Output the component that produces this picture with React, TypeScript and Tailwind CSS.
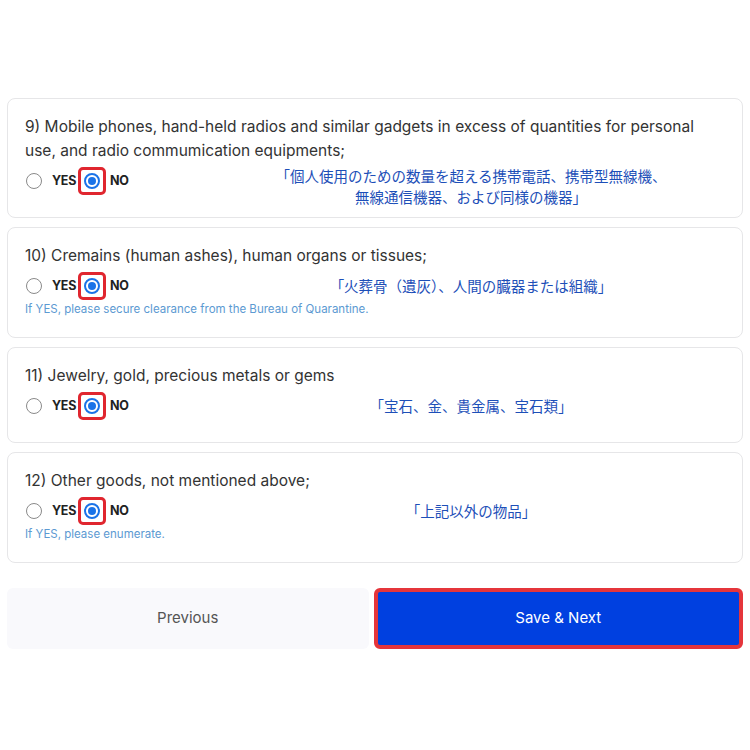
import React from "react";

type Item = {
  no: number;
  text: string;
  jp: string[];
  hint?: string;
};

const ITEMS: Item[] = [
  {
    no: 9,
    text: "Mobile phones, hand-held radios and similar gadgets in excess of quantities for personal use, and radio commumication equipments;",
    jp: ["「個人使用のための数量を超える携帯電話、携帯型無線機、", "無線通信機器、および同様の機器」"],
  },
  {
    no: 10,
    text: "Cremains (human ashes), human organs or tissues;",
    jp: ["「火葬骨（遺灰）、人間の臓器または組織」"],
    hint: "If YES, please secure clearance from the Bureau of Quarantine.",
  },
  {
    no: 11,
    text: "Jewelry, gold, precious metals or gems",
    jp: ["「宝石、金、貴金属、宝石類」"],
  },
  {
    no: 12,
    text: "Other goods, not mentioned above;",
    jp: ["「上記以外の物品」"],
    hint: "If YES, please enumerate.",
  },
];

function RadioRow() {
  return (
    <div className="mt-1 flex h-7 items-center">
      <span className="ml-[1px] h-4 w-4 rounded-full border border-[#8a8a8a] bg-white" />
      <span className="ml-[10px] text-[12.5px] font-bold tracking-[-0.3px] text-[#222]">YES</span>
      <span className="ml-[2px] flex h-7 w-7 items-center justify-center rounded-[5px] border-[3px] border-[#e0262f]">
        <span className="flex h-4 w-4 items-center justify-center rounded-full border-2 border-[#1a73e8] bg-white">
          <span className="h-2 w-2 rounded-full bg-[#1a73e8]" />
        </span>
      </span>
      <span className="ml-[4px] text-[12.5px] font-bold tracking-[-0.3px] text-[#222]">NO</span>
    </div>
  );
}

function QuestionCard({ item }: { item: Item }) {
  const top = item.jp.length > 1 ? "top-[66px]" : "top-[47px]";
  const pb = item.hint ? "pb-5" : "pb-[22px]";
  return (
    <div className={`relative rounded-lg border border-[#e6e6e8] bg-white px-[17px] pt-4 ${pb}`}>
      <p className="max-w-[680px] text-[15.5px] leading-6 text-[#333]">{`${item.no}) ${item.text}`}</p>
      <RadioRow />
      {item.hint && <p className="mt-[1px] text-[11.5px] leading-4 text-[#5c9ad2]">{item.hint}</p>}
      <div
        className={`absolute left-[463px] ${top} -translate-x-1/2 whitespace-nowrap text-center text-[14.5px] leading-[21px] text-[#1d4fb8]`}
        style={{ fontFamily: '"Noto Sans CJK JP", sans-serif' }}
      >
        {item.jp.map((l, i) => (
          <div key={i}>{l}</div>
        ))}
      </div>
    </div>
  );
}

export default function App() {
  return (
    <div className="h-[750px] w-[750px] bg-white px-[7px] pt-[98px]" style={{ fontFamily: "Inter, 'Noto Sans', sans-serif" }}>
      <div className="flex flex-col gap-[9px]">
        {ITEMS.map((it) => (
          <QuestionCard key={it.no} item={it} />
        ))}
      </div>
      <div className="mt-[25px] flex gap-[5px]">
        <button className="flex h-[61px] flex-1 items-center justify-center rounded-md bg-[#f9f9fc] text-[15px] text-[#555]">
          Previous
        </button>
        <button className="flex h-[61px] flex-1 items-center justify-center rounded-md border-[4px] border-[#e5353b] bg-[#0040e0] text-[15px] text-white">
          Save &amp; Next
        </button>
      </div>
    </div>
  );
}
